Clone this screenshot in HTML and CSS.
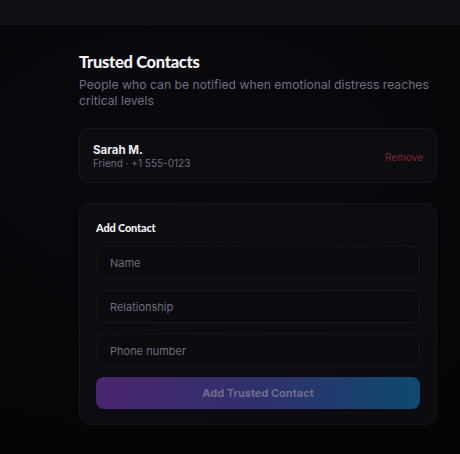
FILE: index.html
```html
<!DOCTYPE html>
<html lang="en">
<head>
<meta charset="utf-8">
<link rel="stylesheet" href="styles.css">
</head>
<body>
<div class="topbar"></div>
<main class="main">
  <section class="section">
    <h1 class="title">Trusted Contacts</h1>
    <p class="desc">People who can be notified when emotional distress reaches critical levels</p>
    <div class="contact">
      <div class="contact-info">
        <div class="contact-name">Sarah M.</div>
        <div class="contact-meta">Friend · +1 555-0123</div>
      </div>
      <span class="remove">Remove</span>
    </div>
    <div class="add-card">
      <h2 class="add-title">Add Contact</h2>
      <div class="field">Name</div>
      <div class="field">Relationship</div>
      <div class="field">Phone number</div>
      <div class="btn">Add Trusted Contact</div>
    </div>
  </section>
</main>
</body>
</html>
```
FILE: styles.css
```css
html, body {
  margin: 0;
  padding: 0;
  height: 100%;
}
body {
  background: #07070b;
  font-family: Inter, "Liberation Sans", sans-serif;
  overflow: hidden;
}
.topbar {
  height: 24px;
  background: #0e0e14;
  border-bottom: 1px solid #14141b;
}
.main {
  height: 429px;
  background: radial-gradient(ellipse 120% 80% at 40% 30%, #0a0a0f 0%, #060609 60%, #050507 100%);
  padding: 27px 0 0 79px;
  box-sizing: border-box;
}
.section {
  width: 358px;
}
.title {
  margin: 0;
  font-family: Lato, "Liberation Sans", sans-serif;
  font-weight: 900;
  font-size: 16.5px;
  letter-spacing: -0.3px;
  color: #f2f2f5;
  line-height: 20px;
}
.desc {
  margin: 5px 0 0;
  font-size: 12.2px;
  line-height: 16px;
  color: #6d7080;
}
.contact {
  margin-top: 19px;
  height: 55px;
  box-sizing: border-box;
  border: 1px solid #17171e;
  border-radius: 10px;
  background: #0c0c11;
  display: flex;
  align-items: center;
  justify-content: space-between;
  padding: 2px 13px 0;
}
.contact-name {
  font-size: 11.5px;
  font-weight: 700;
  color: #ececf0;
  line-height: 14px;
}
.contact-meta {
  font-size: 10px;
  color: #6c6f7d;
  line-height: 13px;
}
.remove {
  font-size: 10px;
  color: #822630;
}
.add-card {
  margin-top: 20px;
  border: 1px solid #16161d;
  border-radius: 12px;
  background: linear-gradient(160deg, #0d0d12 0%, #0b0b10 100%);
  padding: 17px 16px 15px;
  display: flex;
  flex-direction: column;
  gap: 11px;
}
.add-title {
  margin: 0;
  font-family: Lato, "Liberation Sans", sans-serif;
  font-weight: 900;
  font-size: 11px;
  letter-spacing: -0.2px;
  color: #f0f0f4;
  line-height: 14px;
}
.field {
  height: 33px;
  box-sizing: border-box;
  border: 1px solid #15151c;
  border-radius: 8px;
  background: #0b0b10;
  display: flex;
  align-items: center;
  padding-left: 13px;
  font-size: 11px;
  color: #6b6e7c;
}
.btn {
  height: 32px;
  margin-top: -1px;
  border-radius: 8px;
  background: linear-gradient(90deg, #4a2570 0%, #30306e 50%, #0d4a6e 100%);
  display: flex;
  align-items: center;
  justify-content: center;
  font-size: 11px;
  font-weight: 700;
  color: #6e6e88;
}
```
